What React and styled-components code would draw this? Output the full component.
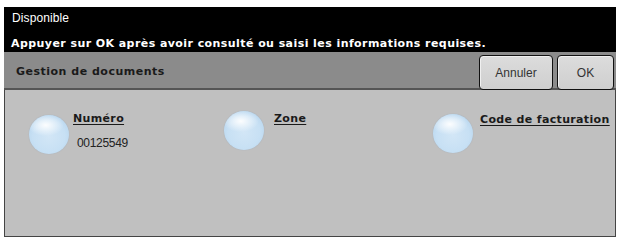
import React from "react";
import styled, { createGlobalStyle } from "styled-components";

const GlobalStyle = createGlobalStyle`
  html, body {
    margin: 0;
    padding: 0;
    background: #ffffff;
  }
  body {
    font-family: "Liberation Sans", Arial, sans-serif;
  }
`;

const Screen = styled.div`
  width: 612px;
  height: 230px;
  margin: 7px 0 0 4px;
  display: flex;
  flex-direction: column;
`;

const Header = styled.div`
  background: #000000;
  color: #ffffff;
  height: 45px;
  box-sizing: border-box;
  padding: 3px 0 0 8px;
  display: flex;
  flex-direction: column;
`;

const Status = styled.div`
  font-family: "Liberation Sans", Arial, sans-serif;
  font-size: 12px;
  line-height: 16px;
  height: 27px;
  letter-spacing: 0.1px;
`;

const Message = styled.div`
  font-family: "DejaVu Sans", Verdana, sans-serif;
  font-weight: bold;
  font-size: 11px;
  line-height: 14px;
  margin-left: -1px;
  letter-spacing: 0.43px;
`;

const TitleBar = styled.div`
  background: #8b8b8b;
  height: 38px;
  box-sizing: border-box;
  border-bottom: 2px solid #555555;
  display: flex;
  align-items: center;
  justify-content: space-between;
  padding: 2px 2px 0 12px;
`;

const Title = styled.div`
  font-family: "DejaVu Sans", Verdana, sans-serif;
  font-weight: bold;
  font-size: 11px;
  color: #1a1a1a;
  letter-spacing: 0.5px;
`;

const Buttons = styled.div`
  display: flex;
  gap: 4px;
  align-self: flex-end;
`;

const Button = styled.button`
  width: ${(p) => p.$w}px;
  height: 35px;
  box-sizing: border-box;
  background: linear-gradient(#dcdcdc, #cfcfcf);
  border: 1.5px solid #111111;
  border-radius: 4px;
  box-shadow: inset 1px 1px 0 #f0f0f0;
  font-family: "Liberation Sans", Arial, sans-serif;
  font-size: 12px;
  color: #333333;
  padding: 0;
  margin-bottom: -2px;
`;

const Content = styled.div`
  flex: 1;
  background: #c0c0c0;
  border: 1px solid #444444;
  border-top: none;
  display: grid;
  grid-template-columns: 195px 209px 1fr;
  align-items: start;
  padding: 22px 0 0 24px;
`;

const Field = styled.div`
  display: flex;
  align-items: flex-start;
  gap: ${(p) => p.$gap}px;
  margin-top: ${(p) => p.$top || 0}px;
`;

const Bubble = styled.div`
  width: 40px;
  height: 39px;
  border-radius: 50%;
  flex: none;
  margin-top: ${(p) => p.$offset || 0}px;
  background:
    radial-gradient(ellipse 45% 28% at 42% 26%, rgba(255, 255, 255, 0.95), rgba(255, 255, 255, 0) 100%),
    radial-gradient(circle at 50% 55%, #d2e6f6 0%, #c7e0f4 55%, #b9d6ee 80%, #a8c8e2 100%);
  box-shadow: 0 0 1px rgba(120, 150, 180, 0.6);
`;

const Texts = styled.div`
  display: flex;
  flex-direction: column;
`;

const Label = styled.div`
  font-family: "DejaVu Sans", Verdana, sans-serif;
  font-weight: bold;
  font-size: 11px;
  color: #1a1a1a;
  text-decoration: underline;
  text-underline-offset: 2px;
  letter-spacing: 0.35px;
  line-height: 14px;
`;

const Value = styled.div`
  font-family: "Liberation Sans", Arial, sans-serif;
  font-size: 12px;
  color: #222222;
  margin: 10px 0 0 4px;
  letter-spacing: -0.3px;
`;

const fields = [
  { label: "Numéro", value: "00125549", top: 0, offset: 3, gap: 4 },
  { label: "Zone", value: "", top: 0, offset: -1, gap: 10 },
  { label: "Code de facturation", value: "", top: 1, offset: 1, gap: 7 },
];

const App = () => {
  return (
    <>
      <GlobalStyle />
      <Screen>
        <Header>
          <Status>Disponible</Status>
          <Message>Appuyer sur OK après avoir consulté ou saisi les informations requises.</Message>
        </Header>
        <TitleBar>
          <Title>Gestion de documents</Title>
          <Buttons>
            <Button $w={74}>Annuler</Button>
            <Button $w={57}>OK</Button>
          </Buttons>
        </TitleBar>
        <Content>
          {fields.map((f) => (
            <Field key={f.label} $top={f.top} $gap={f.gap}>
              <Bubble $offset={f.offset} />
              <Texts>
                <Label>{f.label}</Label>
                {f.value && <Value>{f.value}</Value>}
              </Texts>
            </Field>
          ))}
        </Content>
      </Screen>
    </>
  );
};

export default App;
